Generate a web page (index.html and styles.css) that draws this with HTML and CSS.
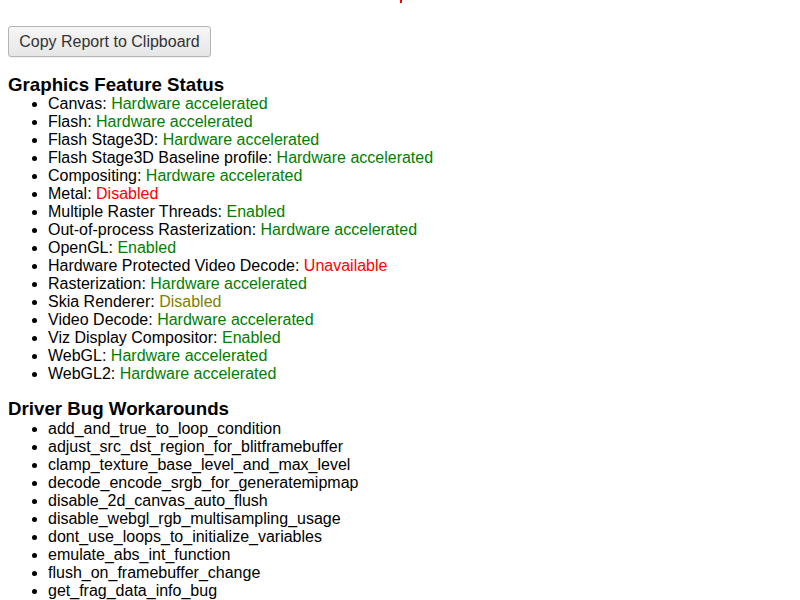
FILE: index.html
```html
<!DOCTYPE html>
<html>
<head>
<meta charset="utf-8">
<link rel="stylesheet" href="styles.css">
</head>
<body>
<span class="clip-mark"></span>
<div class="toolbar">
  <button class="copy-btn">Copy Report to Clipboard</button>
</div>
<h3 class="section-title">Graphics Feature Status</h3>
<ul class="feature-list">
  <li>Canvas: <span class="ok">Hardware accelerated</span></li>
  <li>Flash: <span class="ok">Hardware accelerated</span></li>
  <li>Flash Stage3D: <span class="ok">Hardware accelerated</span></li>
  <li>Flash Stage3D Baseline profile: <span class="ok">Hardware accelerated</span></li>
  <li>Compositing: <span class="ok">Hardware accelerated</span></li>
  <li>Metal: <span class="bad">Disabled</span></li>
  <li>Multiple Raster Threads: <span class="ok">Enabled</span></li>
  <li>Out-of-process Rasterization: <span class="ok">Hardware accelerated</span></li>
  <li>OpenGL: <span class="ok">Enabled</span></li>
  <li>Hardware Protected Video Decode: <span class="bad">Unavailable</span></li>
  <li>Rasterization: <span class="ok">Hardware accelerated</span></li>
  <li>Skia Renderer: <span class="off">Disabled</span></li>
  <li>Video Decode: <span class="ok">Hardware accelerated</span></li>
  <li>Viz Display Compositor: <span class="ok">Enabled</span></li>
  <li>WebGL: <span class="ok">Hardware accelerated</span></li>
  <li>WebGL2: <span class="ok">Hardware accelerated</span></li>
</ul>
<h3 class="section-title second">Driver Bug Workarounds</h3>
<ul class="feature-list">
  <li>add_and_true_to_loop_condition</li>
  <li>adjust_src_dst_region_for_blitframebuffer</li>
  <li>clamp_texture_base_level_and_max_level</li>
  <li>decode_encode_srgb_for_generatemipmap</li>
  <li>disable_2d_canvas_auto_flush</li>
  <li>disable_webgl_rgb_multisampling_usage</li>
  <li>dont_use_loops_to_initialize_variables</li>
  <li>emulate_abs_int_function</li>
  <li>flush_on_framebuffer_change</li>
  <li>get_frag_data_info_bug</li>
</ul>
</body>
</html>
```
FILE: styles.css
```css
html, body {
  margin: 0;
  padding: 0;
  background: #fff;
  overflow: hidden;
}
body {
  padding: 0 8px;
  font-family: "Liberation Sans", Arial, Helvetica, sans-serif;
  font-size: 16px;
  line-height: 18px;
  color: #000;
  height: 600px;
}
.clip-mark {
  position: absolute;
  left: 400px;
  top: 0;
  width: 2px;
  height: 3px;
  background: #ff0000;
}
.toolbar {
  padding-top: 26px;
}
.copy-btn {
  font-family: "Liberation Sans", Arial, Helvetica, sans-serif;
  font-size: 16px;
  line-height: 18px;
  color: #333;
  height: 31px;
  width: 203px;
  padding: 0 10px;
  border: 1px solid #b4b4b4;
  border-radius: 3px;
  background: linear-gradient(#f6f6f6, #e6e6e6);
  box-shadow: 0 1px 0 rgba(0,0,0,0.06);
}
.section-title {
  font-size: 18.72px;
  font-weight: bold;
  line-height: 18px;
  margin: 19px 0 1px 0;
}
.section-title.second {
  margin-top: 16px;
  margin-bottom: 2px;
  line-height: 19px;
}
.feature-list {
  margin: 0;
  padding-left: 40px;
}
.ok { color: #008000; }
.bad { color: #ff0000; }
.off { color: #808000; }
```
